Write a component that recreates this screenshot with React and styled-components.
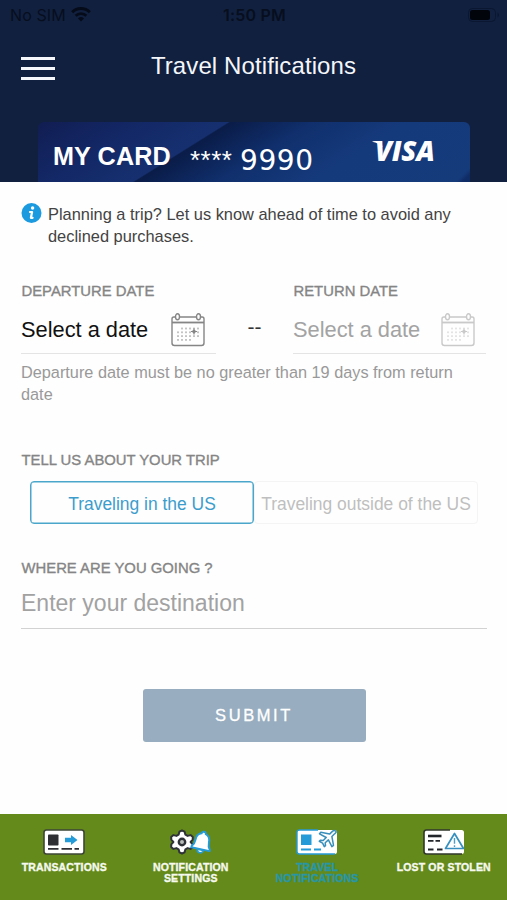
import React, { useState } from "react";
import styled, { createGlobalStyle } from "styled-components";

const GlobalStyle = createGlobalStyle`
  * {
    box-sizing: border-box;
  }
  body {
    margin: 0;
    background: #fff;
    font-family: "Liberation Sans", Arial, sans-serif;
  }
`;

const WifiIcon = () => (
  <svg width="20" height="15" viewBox="0 0 20 15" fill="none" stroke="#050b19">
    <path d="M1.2 5.2a12.6 12.6 0 0 1 17.6 0" strokeWidth="3" />
    <path d="M4.6 8.8a7.8 7.8 0 0 1 10.8 0" strokeWidth="2.6" />
    <path d="M10 14.6 7 11.4a4.4 4.4 0 0 1 6 0z" fill="#050b19" stroke="none" />
  </svg>
);

const BatteryIcon = () => (
  <svg width="32" height="14" viewBox="0 0 32 14">
    <rect x="0.5" y="0.5" width="27" height="13" rx="4" fill="none" stroke="#0b1730" />
    <rect x="2" y="2" width="20" height="10" rx="2.5" fill="#01040b" />
    <path d="M29.5 4.5v5c1-.4 1.5-1.4 1.5-2.5s-.5-2.1-1.5-2.5z" fill="#0b1730" />
  </svg>
);

const InfoIcon = () => (
  <svg width="21" height="20" viewBox="0 0 21 20">
    <circle cx="10.5" cy="10" r="10" fill="#1c9ae0" />
    <circle cx="11.6" cy="5" r="1.7" fill="#fff" />
    <path
      d="M9 9h2.100L9.900 14.800h1.700"
      fill="none"
      stroke="#fff"
      strokeWidth="2.200"
      strokeLinecap="round"
      strokeLinejoin="round"
    />
  </svg>
);

const dots = [];
for (let row = 0; row < 4; row++) {
  for (let col = 0; col < 6; col++) {
    if (row === 0 && col === 0) continue;
    if (row === 3 && col > 3) continue;
    dots.push([7 + col * 4, 15.5 + row * 3.8]);
  }
}

const CalendarIcon = ({ color, dotColor }) => (
  <svg width="34" height="34" viewBox="0 0 34 34" fill="none" stroke={color}>
    <path d="M4.5 4H2.8Q1 4 1 6v24q0 2.5 2.5 2.5h27Q33 32.5 33 30V6q0-2-1.8-2h-1.7M8.5 4h17" strokeWidth="1.4" />
    <path d="M1 9.5h32" strokeWidth="1.8" />
    <ellipse cx="6.5" cy="3.8" rx="2" ry="3" strokeWidth="1.4" />
    <ellipse cx="27.5" cy="3.8" rx="2" ry="3" strokeWidth="1.4" />
    {dots.map(([x, y]) => (
      <rect key={`${x}-${y}`} x={x - 0.9} y={y - 0.9} width="1.8" height="1.8" fill={dotColor} stroke="none" />
    ))}
    <path d="M23 15.5v6M20 18.5h6" strokeWidth="1.2" />
    <circle cx="23" cy="18.5" r="1.8" fill={color} stroke="none" />
  </svg>
);

const TransactionsIcon = () => (
  <svg width="42" height="26" viewBox="0 0 42 26">
    <rect x="1" y="1" width="40" height="24" rx="2.5" fill="#fff" stroke="#3d4536" strokeWidth="1.6" />
    <rect x="5" y="5.5" width="10.5" height="11" rx="0.8" fill="#2d2f33" />
    <path d="M22 8.8h6V6l6.5 5-6.5 5v-2.8H22z" fill="#259bd8" />
    <path d="M5 19.8h10.5M18.5 19.8H29M31.5 19.8H36" stroke="#2d2f33" strokeWidth="1.8" />
  </svg>
);

const NotificationIcon = () => (
  <svg width="42" height="26" viewBox="0 0 42 26">
    <path
      d="M12 1.500l2.600 1.200.8 3 2.200 1.200 3-.8 2.200 1.800-.1 2.800-2.100 2.300 2.100 2.300.1 2.800-2.200 1.800-3-.8-2.200 1.200-.8 3-2.600 1.200-2.600-1.200-.8-3-2.200-1.200-3 .8-2.200-1.800.1-2.800L3.400 13l-2.100-2.300-.1-2.800 2.200-1.800 3 .8 2.200-1.200.8-3z"
      fill="#fff"
      stroke="#2f3338"
      strokeWidth="2"
      strokeLinejoin="round"
    />
    <circle cx="12" cy="13" r="3.2" fill="#b9bdb9" stroke="#2f3338" strokeWidth="2.4" />
    <g transform="rotate(12 32 13)">
      <path
        d="M32 2.6c1.5 0 2.1.9 2.2 2 3.5 1.100 4.700 4 4.700 7.500 0 3.600.8 5.300 2.400 7v1.300H22.700v-1.300c1.600-1.700 2.400-3.400 2.400-7 0-3.500 1.200-6.400 4.700-7.500.1-1.100.7-2 2.200-2z"
        fill="#fff"
        stroke="#259bd8"
        strokeWidth="2"
      />
      <path d="M29 21a3 3 0 0 0 6 0z" fill="#fff" stroke="#259bd8" strokeWidth="1.6" />
    </g>
  </svg>
);

const TravelIcon = () => (
  <svg width="42" height="26" viewBox="0 0 42 26">
    <rect x="1" y="1" width="40" height="24" rx="2.5" fill="#fff" />
    <path d="M22 1H3.5Q1 1 1 3.5v19Q1 25 3.5 25H39" fill="none" stroke="#259bd8" strokeWidth="1.4" />
    <rect x="5" y="5.5" width="10.5" height="10.5" fill="#259bd8" />
    <path d="M5 20.5h10M18 20.5h7" stroke="#259bd8" strokeWidth="1.8" />
    <path
      d="M39.8 2.2c-1-1-2.5-.7-3.4.2l-2.8 2.7-8.800-1.800-1.300 1.500 6.700 3.700-3 3.100-2.900-.4-1 1.100 3.300 1.900 1.700 3.500 1.200-1-.3-2.900 3.200-2.900 3.500 6.700 1.600-1.300-1.600-8.800 2.700-2.700c1.400-1 2-1.900 1.200-2.600z"
      fill="#fff"
      stroke="#398fba"
      strokeWidth="1.5"
      strokeLinejoin="round"
    />
  </svg>
);

const LostIcon = () => (
  <svg width="42" height="26" viewBox="0 0 42 26">
    <rect x="1" y="1" width="40" height="24" rx="2.5" fill="#fff" />
    <path d="M27 1H3.5Q1 1 1 3.5v19Q1 25 3.5 25H39" fill="none" stroke="#30372b" strokeWidth="1.6" />
    <path d="M5 7h13.5" stroke="#22252a" strokeWidth="2.6" />
    <path d="M5 11.8h5.5M12.5 11.8H17M5 20.5h5.500M14 20.5h5.5" stroke="#22252a" strokeWidth="1.8" />
    <path d="M31.5 4.500 40.500 19.500h-18z" fill="#fff" stroke="#368fbf" strokeWidth="1.7" strokeLinejoin="round" />
    <path d="M31.5 9v5.800M31.5 16.300v1.600" stroke="#4b9fc8" strokeWidth="1.4" />
  </svg>
);

const tabs = [
  { id: "transactions", lines: ["TRANSACTIONS"], icon: <TransactionsIcon /> },
  { id: "settings", lines: ["NOTIFICATION", "SETTINGS"], icon: <NotificationIcon /> },
  { id: "travel", lines: ["TRAVEL", "NOTIFICATIONS"], icon: <TravelIcon /> },
  { id: "lost", lines: ["LOST OR STOLEN"], icon: <LostIcon /> }
];

const App = () => {
  const [inUs, setInUs] = useState(true);
  const [tab, setTab] = useState("travel");

  return (
    <Screen>
      <GlobalStyle />
      <Header>
        <StatusBar>
          <Carrier>
            No SIM <WifiIcon />
          </Carrier>
          <Clock>1:50 PM</Clock>
          <BatteryIcon />
        </StatusBar>
        <TitleBar>
          <MenuButton aria-label="Menu">
            <span />
            <span />
            <span />
          </MenuButton>
          <Title>Travel Notifications</Title>
        </TitleBar>
        <Card>
          <CardName>MY CARD</CardName>
          <CardStars>****</CardStars>
          <CardDigits>9990</CardDigits>
          <Visa>
            <svg width="11" height="6" viewBox="0 0 11 6">
              <path d="M0 .8Q1 0 3 0h4q2 0 2.4 2L10.5 6Q7 2 0 .8z" fill="#fff" />
            </svg>
            VISA
          </Visa>
        </Card>
      </Header>

      <Content>
        <Notice>
          <InfoIcon />
          <p>
            Planning a trip? Let us know ahead of time to avoid any
            <br />
            declined purchases.
          </p>
        </Notice>

        <Dates>
          <DateField>
            <Label>DEPARTURE DATE</Label>
            <DateValue>
              Select a date
              <CalendarIcon color="#858585" dotColor="#bdbdbd" />
            </DateValue>
          </DateField>
          <Dash>--</Dash>
          <DateField>
            <Label>RETURN DATE</Label>
            <DateValue $disabled>
              Select a date
              <CalendarIcon color="#c9c9c9" dotColor="#e2e2e2" />
            </DateValue>
          </DateField>
        </Dates>
        <Hint>
          Departure date must be no greater than 19 days from return
          <br />
          date
        </Hint>

        <Label>TELL US ABOUT YOUR TRIP</Label>
        <Segments>
          <Segment $active={inUs} onClick={() => setInUs(true)}>
            Traveling in the US
          </Segment>
          <Segment $active={!inUs} onClick={() => setInUs(false)}>
            Traveling outside of the US
          </Segment>
        </Segments>

        <Label>WHERE ARE YOU GOING ?</Label>
        <Destination placeholder="Enter your destination" />
        <SubmitButton>SUBMIT</SubmitButton>
      </Content>

      <TabBar>
        {tabs.map(({ id, lines, icon }) => (
          <Tab key={id} $active={tab === id} onClick={() => setTab(id)}>
            {icon}
            <TabLabel>
              {lines.map(line => (
                <span key={line}>{line}</span>
              ))}
            </TabLabel>
          </Tab>
        ))}
      </TabBar>
    </Screen>
  );
};

const Screen = styled.div`
  display: flex;
  flex-direction: column;
  width: 507px;
  height: 900px;
  overflow: hidden;
  background: #fefefe;
`;

const Header = styled.header`
  display: flex;
  flex-direction: column;
  height: 182px;
  flex-shrink: 0;
  background: #11203f;
`;

const StatusBar = styled.div`
  display: grid;
  grid-template-columns: 1fr auto 1fr;
  align-items: center;
  height: 29px;
  padding: 0 7px 0 10px;
  font-family: Inter, sans-serif;
  color: #070e1e;

  > svg {
    justify-self: end;
  }
`;

const Carrier = styled.div`
  display: flex;
  align-items: center;
  gap: 5px;
  font-size: 16px;
  letter-spacing: 0.1px;
`;

const Clock = styled.div`
  padding-right: 1px;
  font-size: 16px;
  font-weight: 600;
  letter-spacing: 0.2px;
`;

const TitleBar = styled.div`
  display: grid;
  grid-template-columns: 35px 1fr 35px;
  align-items: center;
  height: 75px;
  padding: 0 21px;
`;

const MenuButton = styled.button`
  display: flex;
  flex-direction: column;
  gap: 7px;
  width: 34px;
  padding: 3px 0 0;
  border: 0;
  background: none;

  span {
    height: 3px;
    background: #f6f7fa;
  }
`;

const Title = styled.h1`
  margin: 0;
  padding-bottom: 2px;
  text-align: center;
  font-size: 24px;
  font-weight: 400;
  line-height: 28px;
  letter-spacing: 0.1px;
  color: #f4f6fa;
`;

const Card = styled.div`
  display: flex;
  align-items: flex-start;
  height: 60px;
  margin: 18px 37px 0 38px;
  padding-left: 15px;
  border-radius: 6px 6px 0 0;
  color: #fff;
  background:
    linear-gradient(135deg, transparent 97%, #0f2c66 98.5%),
    linear-gradient(
      148deg,
      #111d52 0%,
      #132765 18%,
      #16306f 36%,
      #0a1c48 36.5%,
      #102f6c 52%,
      #153a7c 70%,
      #163b7b 100%
    );
`;

const CardName = styled.div`
  width: 137px;
  padding-top: 20px;
  font-size: 25.2px;
  font-weight: 700;
  line-height: 28px;
  letter-spacing: 0.1px;
  white-space: nowrap;
`;

const CardStars = styled.div`
  width: 50px;
  padding-top: 24px;
  font-size: 26px;
  line-height: 28px;
  letter-spacing: 0.5px;
`;

const CardDigits = styled.div`
  width: 132px;
  padding-top: 25px;
  font-family: "DejaVu Sans", sans-serif;
  font-size: 28px;
  line-height: 28px;
  letter-spacing: 0.6px;
`;

const Visa = styled.div`
  display: flex;
  padding-top: 19px;
  font-family: "Open Sans", sans-serif;
  font-size: 27.5px;
  font-style: italic;
  font-weight: 800;
  line-height: 20px;
  letter-spacing: -0.2px;

  svg {
    margin-right: -8px;
  }
`;

const Content = styled.main`
  display: flex;
  flex-direction: column;
  flex: 1;
  padding: 21px 20px 0 21px;
`;

const Notice = styled.div`
  display: flex;
  gap: 6px;
  height: 77px;

  p {
    margin: 0;
    font-size: 16.4px;
    line-height: 22px;
    white-space: nowrap;
    color: #434343;
  }
`;

const Label = styled.div`
  height: 20px;
  padding-left: 0.5px;
  font-size: 14.85px;
  line-height: 21px;
  white-space: nowrap;
  color: #858585;
  -webkit-text-stroke: 0.35px #858585;
`;

const Dates = styled.div`
  display: grid;
  grid-template-columns: 195px 77px 193px;
`;

const DateField = styled.div`
  ${Label} {
    line-height: 23px;
  }
`;

const DateValue = styled.div`
  display: flex;
  align-items: center;
  justify-content: space-between;
  height: 54px;
  padding: 7px 11px 0 0;
  border-bottom: 1px solid #e4e4e4;
  font-size: 21.8px;
  white-space: nowrap;
  color: ${props => (props.$disabled ? "#a3a3a3" : "#111")};
`;

const Dash = styled.div`
  padding-top: 35px;
  text-align: center;
  font-size: 21px;
  line-height: 24px;
  color: #333;
`;

const Hint = styled.p`
  height: 89px;
  margin: 7px 0 0;
  font-size: 16.3px;
  line-height: 22px;
  white-space: nowrap;
  color: #999;
`;

const Segments = styled.div`
  display: grid;
  grid-template-columns: 224px 224px;
  height: 43px;
  margin: 11px 0 34px 9px;
`;

const Segment = styled.button`
  padding: 3px 0 0;
  border: ${props => (props.$active ? "1px solid #4ba6cb" : "1px solid #f4f4f4")};
  border-radius: 4px;
  box-shadow: ${props => (props.$active ? "inset 0 0 0 0.5px #4ba6cb" : "none")};
  background: #fefefe;
  font-family: inherit;
  font-size: 17.45px;
  white-space: nowrap;
  color: ${props => (props.$active ? "#3c9dcc" : "#bfbfbf")};
`;

const Destination = styled.input`
  height: 51px;
  padding: 0;
  border: 0;
  border-bottom: 1px solid #d2d2d2;
  background: none;
  font-family: inherit;
  font-size: 23px;

  &::placeholder {
    color: #a2a2a2;
    opacity: 1;
  }
`;

const SubmitButton = styled.button`
  align-self: center;
  width: 223px;
  height: 53px;
  margin-top: 60px;
  padding: 0;
  border: 0;
  border-radius: 3px;
  background: #98adbf;
  font-family: inherit;
  font-size: 16.5px;
  letter-spacing: 2.6px;
  color: #fff;
  -webkit-text-stroke: 0.3px #fff;
`;

const TabBar = styled.nav`
  display: grid;
  grid-template-columns: repeat(4, 1fr);
  height: 86px;
  padding-left: 1px;
  background: #648a1b;
`;

const Tab = styled.button`
  display: flex;
  flex-direction: column;
  align-items: center;
  padding: 15px 0 0;
  border: 0;
  background: none;
  font-family: inherit;
  color: ${props => (props.$active ? "#2796a6" : "#f6f9ef")};
`;

const TabLabel = styled.div`
  display: flex;
  flex-direction: column;
  align-items: center;
  margin-top: 7px;
  font-size: 10.5px;
  font-weight: 700;
  line-height: 11px;
  letter-spacing: 0.15px;
  white-space: nowrap;
  -webkit-text-stroke: 0.35px currentColor;
`;

export default App;
